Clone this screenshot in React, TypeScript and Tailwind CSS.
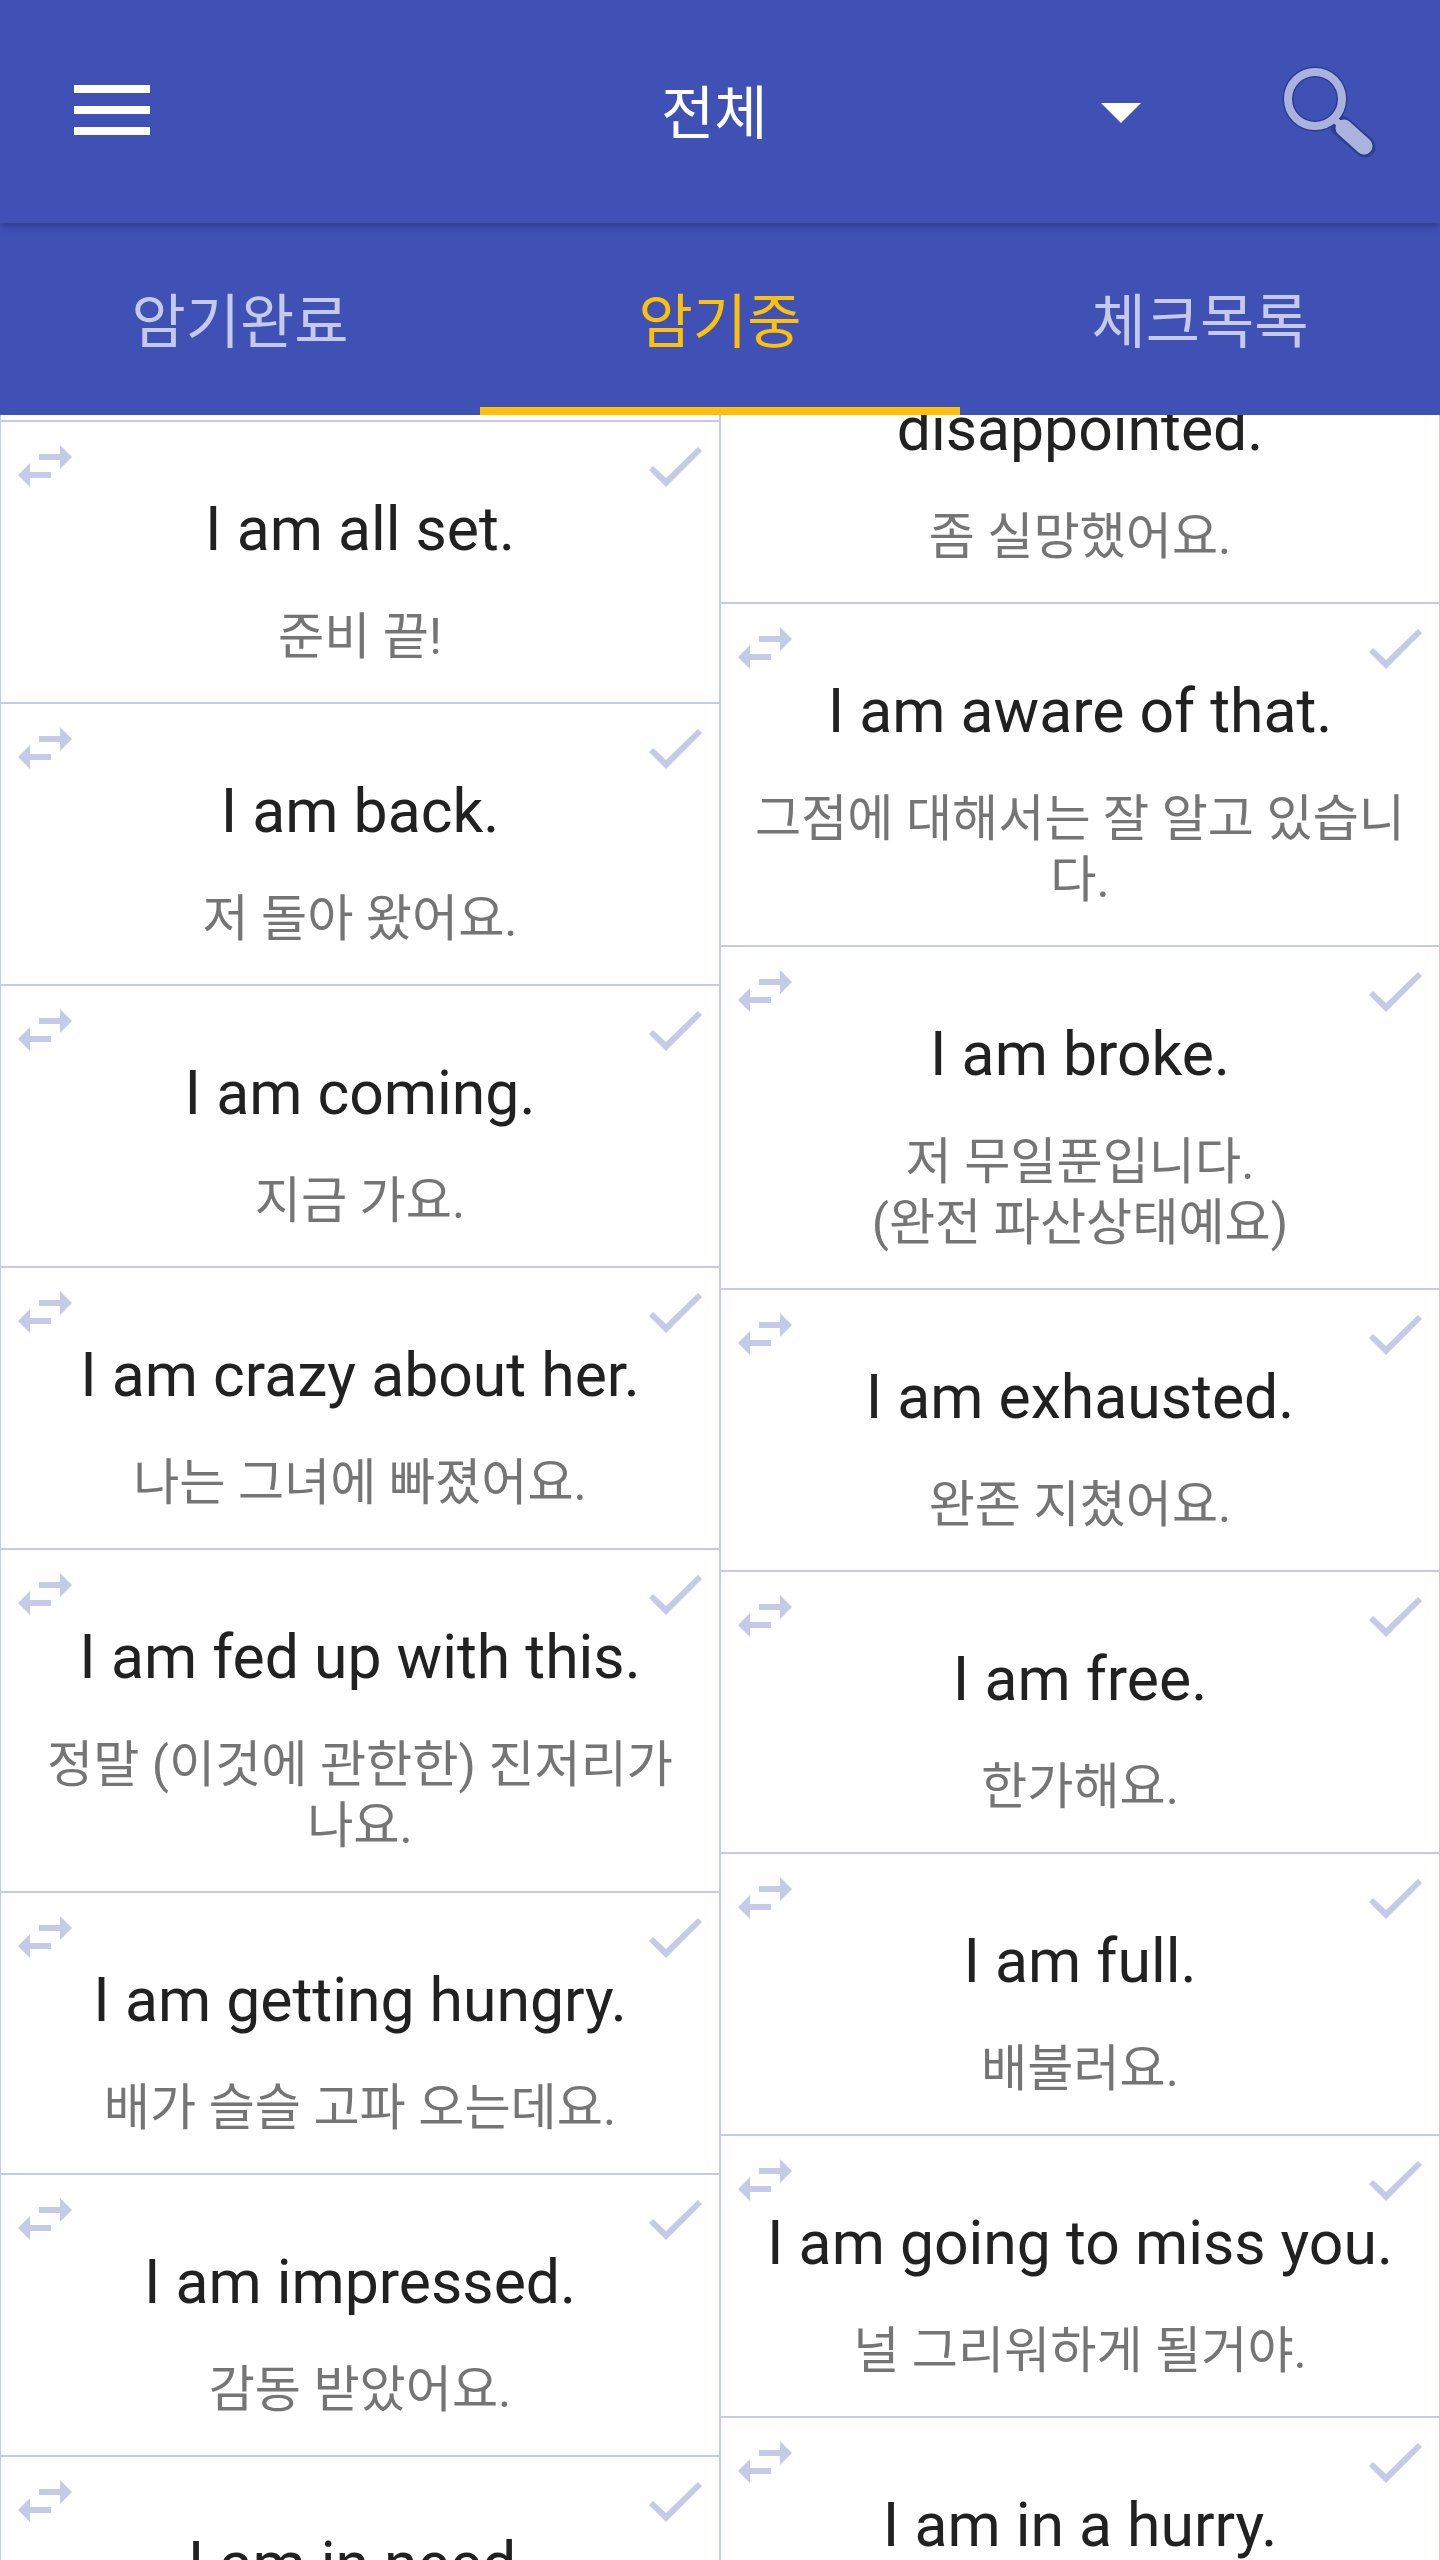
import React from 'react';

const SANS = "font-['Roboto','Noto_Sans_CJK_KR',sans-serif]";

type Card = { en: string; ko: string[] };

const leftCards: Card[] = [
  { en: 'I am all set.', ko: ['준비 끝!'] },
  { en: 'I am back.', ko: ['저 돌아 왔어요.'] },
  { en: 'I am coming.', ko: ['지금 가요.'] },
  { en: 'I am crazy about her.', ko: ['나는 그녀에 빠졌어요.'] },
  { en: 'I am fed up with this.', ko: ['정말 (이것에 관한한) 진저리가', '나요.'] },
  { en: 'I am getting hungry.', ko: ['배가 슬슬 고파 오는데요.'] },
  { en: 'I am impressed.', ko: ['감동 받았어요.'] },
  { en: 'I am in need.', ko: ['도움이 필요해요.'] },
];

const rightCards: Card[] = [
  { en: 'I am aware of that.', ko: ['그점에 대해서는 잘 알고 있습니', '다.'] },
  { en: 'I am broke.', ko: ['저 무일푼입니다.', '(완전 파산상태예요)'] },
  { en: 'I am exhausted.', ko: ['완존 지쳤어요.'] },
  { en: 'I am free.', ko: ['한가해요.'] },
  { en: 'I am full.', ko: ['배불러요.'] },
  { en: 'I am going to miss you.', ko: ['널 그리워하게 될거야.'] },
  { en: 'I am in a hurry.', ko: ['바빠요.'] },
];

function SwapIcon() {
  return (
    <svg width="54" height="42" viewBox="0 0 54 42" className="absolute left-[17px] top-[23px]">
      <path d="M21 9h21V0l12 12-12 12v-9H21z" fill="#c5cae9" />
      <path d="M33 27H12v-9L0 30l12 12v-9h21z" fill="#c5cae9" />
    </svg>
  );
}

function CheckIcon() {
  return (
    <svg width="54" height="42" viewBox="0 0 54 42" className="absolute right-[16px] top-[24px]">
      <path d="M0 24l4-4 13 12L49 1l4 4-36 36z" fill="#c5cae9" />
    </svg>
  );
}

function WordCard({ card }: { card: Card }) {
  return (
    <div className="relative flex flex-col items-center border-t-2 border-[#c5cae9] pt-[75px] pb-[35px]">
      <SwapIcon />
      <CheckIcon />
      <div className="text-[60.7px] leading-[66px] text-[#212121]">{card.en}</div>
      <div className="mt-[43px] px-[30px] text-center text-[50.2px] leading-[61px] text-[#757575]">
        {card.ko.map((line) => (
          <div key={line}>{line}</div>
        ))}
      </div>
    </div>
  );
}

function Tab({ label, active }: { label: string; active?: boolean }) {
  return (
    <div
      className={
        active
          ? 'flex-1 flex items-center justify-center border-b-8 border-[#ffc107] text-[#ffc107] pt-[16px]'
          : 'flex-1 flex items-center justify-center border-b-8 border-transparent text-[#c5cae9] pt-[16px]'
      }
    >
      {label}
    </div>
  );
}

export default function App() {
  return (
    <div className={`${SANS} relative w-[1440px] h-[2560px] overflow-hidden bg-white flex flex-col`}>
      <div className="relative z-10 h-[223px] shrink-0 bg-[#3f51b5] flex items-center shadow-[0_3px_8px_rgba(0,0,0,0.25)]">
        <div className="ml-[74px] mb-[3px] flex w-[76px] flex-col gap-[13px]">
          <div className="h-2 bg-white" />
          <div className="h-2 bg-white" />
          <div className="h-2 bg-white" />
        </div>
        <div className="ml-[511px] mt-[5px] text-[58px] text-white">전체</div>
        <svg width="40" height="20" viewBox="0 0 40 20" className="ml-[333px] mt-[3px]">
          <path d="M0 0h40L20 20z" fill="#fff" />
        </svg>
        <svg width="100" height="101" viewBox="0 0 100 101" className="ml-[138px]">
          <g opacity="0.85">
            <circle cx="36" cy="38" r="27" fill="none" stroke="#2c3a86" strokeWidth="11" />
            <path d="M62 65l24 21" stroke="#2c3a86" strokeWidth="21" strokeLinecap="round" />
          </g>
          <circle cx="36" cy="38" r="27" fill="none" stroke="#a9b3de" strokeWidth="8" />
          <path d="M55 58l10 9" stroke="#a9b3de" strokeWidth="7" />
          <path d="M65 67l20 18" stroke="#a9b3de" strokeWidth="17" strokeLinecap="round" />
        </svg>
      </div>
      <div className="flex h-[192px] shrink-0 bg-[#3f51b5] text-[59px]">
        <Tab label="암기완료" />
        <Tab label="암기중" active />
        <Tab label="체크목록" />
      </div>
      <div className="flex flex-1 overflow-hidden">
        <div className="w-[721px] shrink-0 border-l border-r-2 border-[#c5cae9] pt-[5px]">
          {leftCards.map((c) => (
            <WordCard key={c.en} card={c} />
          ))}
        </div>
        <div className="w-[719px] shrink-0 border-r border-[#c5cae9]">
          <div className="flex flex-col items-center h-[187px] justify-end pb-[35px] overflow-hidden">
            <div className="text-[60.7px] leading-[66px] text-[#212121]">disappointed.</div>
            <div className="mt-[43px] text-[50.2px] leading-[61px] text-[#757575]">좀 실망했어요.</div>
          </div>
          {rightCards.map((c) => (
            <WordCard key={c.en} card={c} />
          ))}
        </div>
      </div>
    </div>
  );
}
